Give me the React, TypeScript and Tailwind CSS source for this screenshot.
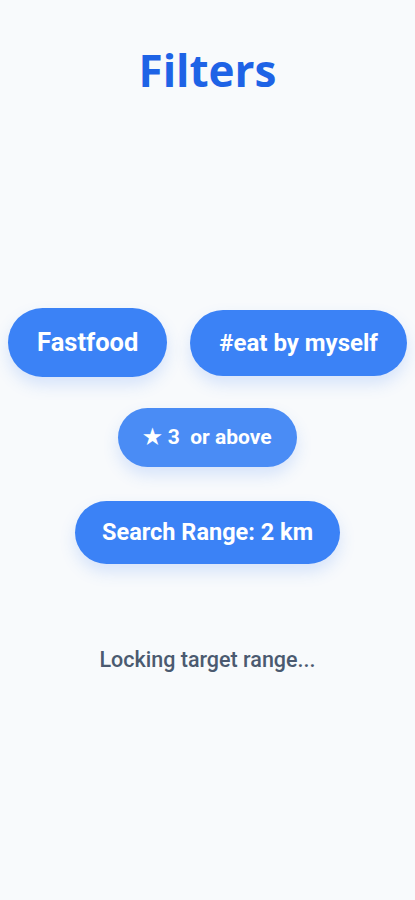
import React from "react";

export default function App() {
  return (
    <div className="min-h-[900px] w-full bg-[#f8fafc] flex flex-col items-center" style={{ fontFamily: "Roboto, 'Liberation Sans', sans-serif" }}>
      <h1 className="mt-[40px] text-[44px] leading-[60px] font-bold text-[#1e63e6]" style={{ fontFamily: "'Open Sans', 'Noto Sans', sans-serif" }}>
        Filters
      </h1>
      <div className="mt-[208px] flex flex-row items-center justify-center gap-[23px] w-full">
        <div className="h-[69px] px-[29px] rounded-full bg-[#3b82f6] text-white text-[25.5px] font-bold flex items-center justify-center shadow-[0_8px_16px_rgba(59,130,246,0.18)]">
          Fastfood
        </div>
        <div className="h-[66px] px-[29px] rounded-full bg-[#3b82f6] text-white text-[24px] font-bold flex items-center justify-center shadow-[0_8px_16px_rgba(59,130,246,0.18)]">
          #eat by myself
        </div>
      </div>
      <div className="mt-[31px] h-[59px] px-[25px] rounded-full bg-[#4a8cf5] text-white text-[21px] font-bold flex items-center justify-center shadow-[0_8px_16px_rgba(59,130,246,0.18)] whitespace-pre">
        {"★ 3  or above"}
      </div>
      <div className="mt-[34px] h-[63px] px-[27px] rounded-full bg-[#3b82f6] text-white text-[23.5px] font-bold flex items-center justify-center shadow-[0_8px_16px_rgba(59,130,246,0.18)]">
        Search Range: 2 km
      </div>
      <p className="mt-[80px] text-[21.5px] font-medium text-[#4b5a70]">Locking target range...</p>
    </div>
  );
}
